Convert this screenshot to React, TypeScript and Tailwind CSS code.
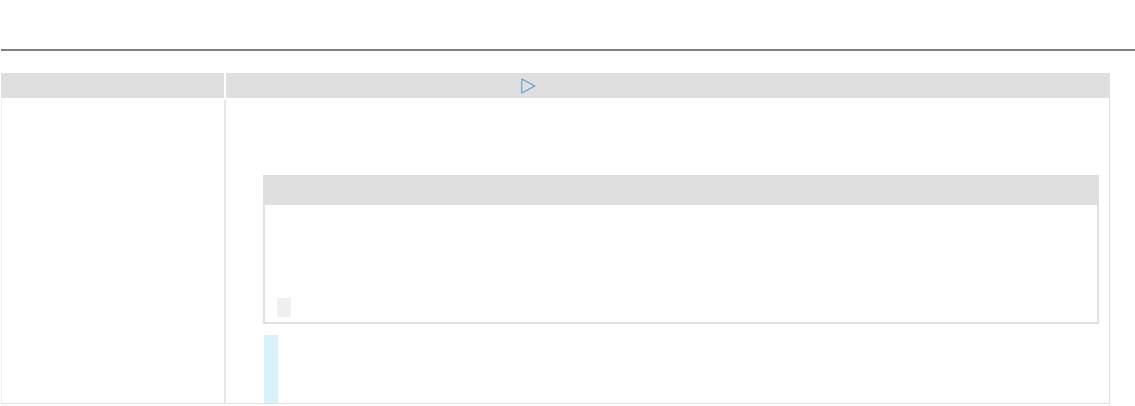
export default function App() {
  return (
    <div className="w-[1135px] h-[406px] bg-white overflow-hidden relative font-['Liberation_Sans',sans-serif]">
      <div className="h-[49px]" />
      <div className="ml-px h-[2px] bg-[#808080]" />
      <div className="h-[22px]" />
      <div className="ml-px w-[1109px]">
        {/* header row */}
        <div className="flex h-[25px]">
          <div className="w-[223px] bg-[#dfdfdf]" />
          <div className="w-[2px]" />
          <div className="flex-1 bg-[#dfdfdf] flex items-center pl-[295px]">
            <svg width="15" height="16" viewBox="0 0 15 16" fill="none">
              <path d="M0.8 1 L13.8 8 L0.8 15 Z" stroke="#5a9fcb" strokeWidth="1.1" strokeLinejoin="round" />
            </svg>
          </div>
        </div>
        {/* body row */}
        <div className="flex h-[306px] border-b border-[#e2e2e2]">
          <div className="w-[223px] border-l border-[#f0f0f0] mt-[2px]" />
          <div className="w-[2px] bg-[#e6e6e6] mt-[2px]" />
          <div className="flex-1 border-r border-[#dcdcdc] pl-[37px] pr-[10px] pt-[77px] flex flex-col">
            <div className="border-2 border-t-0 border-[#e0e0e0]">
              <div className="h-[30px] bg-[#dfdfdf] -mx-[2px]" />
              <div className="h-[117px] pl-[12px] pt-[93px]">
                <div className="w-[14px] h-[19px] bg-[#f0f0f0]" />
              </div>
            </div>
            <div className="mt-[11px] ml-px w-[14px] flex-1 bg-[#d9f1fb]" />
          </div>
        </div>
      </div>
    </div>
  );
}
